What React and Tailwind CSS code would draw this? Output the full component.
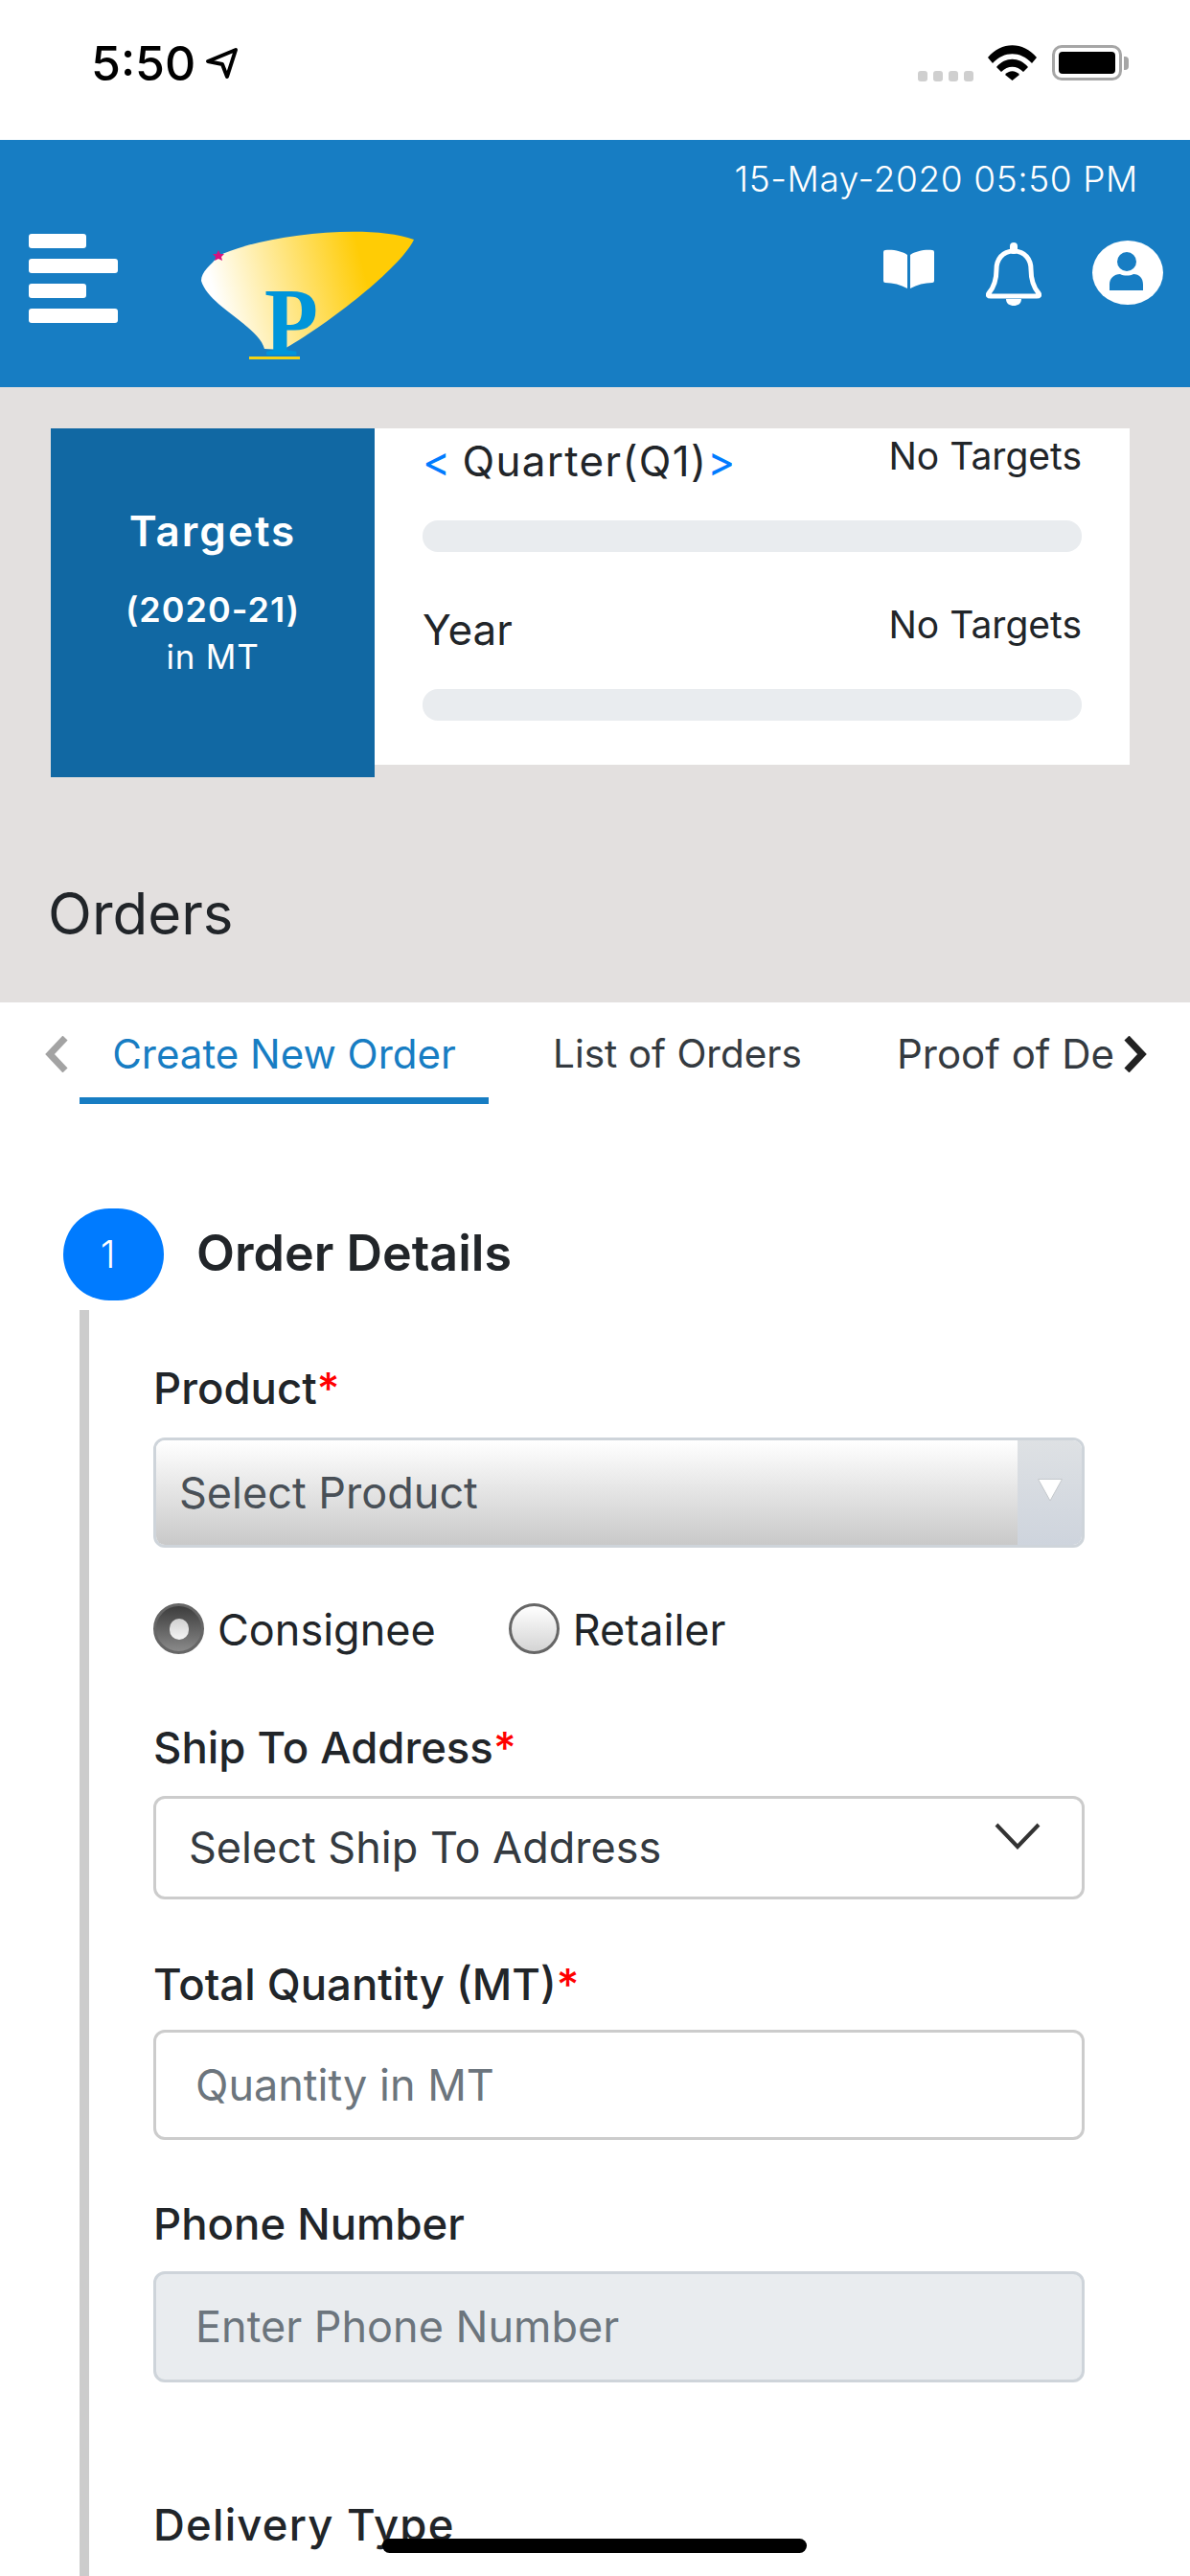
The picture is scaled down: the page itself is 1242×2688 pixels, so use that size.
const Bar = ({ className }) => <div className={`h-[15px] rounded-[3px] bg-white ${className}`} />;

function StatusBar() {
  return (
    <div className="relative h-[146px] bg-white">
      <div className="absolute left-[95px] top-[37px] text-[50px] leading-[58px] font-medium text-black">5:50</div>
      <svg className="absolute left-[214px] top-[49px]" width="35" height="34" viewBox="0 0 35 34">
        <path d="M3 15 L32 3 L23 31 L18 18 Z" fill="none" stroke="#000" strokeWidth="4" strokeLinejoin="round" />
      </svg>
      <div className="absolute right-[226px] top-[74px] flex gap-[6px]">
        {[0, 1, 2, 3].map((i) => (
          <div key={i} className="w-[10px] h-[11px] rounded-[3px] bg-[#cfcfcf]" />
        ))}
      </div>
      <svg className="absolute left-[1031px] top-[47px]" width="51" height="37" viewBox="0 0 51 37">
        <path d="M0 13 C14 -4 37 -4 51 13 L46 19 C34 6 17 6 5 19 Z" fill="#000" />
        <path d="M9 23 C18 12 33 12 42 23 L37 28 C30 21 21 21 14 28 Z" fill="#000" />
        <path d="M18 31 C22 26 29 26 33 31 L25.5 37 Z" fill="#000" />
      </svg>
      <div className="absolute left-[1098px] top-[47px] w-[73px] h-[37px] rounded-[10px] border-[3px] border-[#a6a6a6] p-[4px]">
        <div className="w-full h-full rounded-[4px] bg-black" />
      </div>
      <div className="absolute left-[1173px] top-[59px] w-[5px] h-[14px] rounded-r-[4px] bg-[#a6a6a6]" />
    </div>
  );
}

function Logo() {
  return (
    <svg width="224" height="136" viewBox="0 0 224 136" className="ml-[87px] mt-[-4px] overflow-visible">
      <defs>
        <linearGradient id="beam" x1="0" y1="0.1" x2="0.72" y2="0">
          <stop offset="0" stopColor="#ffffff" />
          <stop offset="1" stopColor="#ffcc05" />
        </linearGradient>
      </defs>
      <path
        d="M18 27 C60 6 172 -8 222 10 C208 40 130 100 85 125 L66 124 C60 100 8 80 0 53 C0 43 10 37 18 27 Z"
        fill="url(#beam)"
      />
      <polygon points="18,21 20,25 24,25 21,28 22,32 18,30 14,32 15,28 12,25 16,25" fill="#d6127f" />
      <text
        x="66"
        y="131"
        fontFamily="'Liberation Serif', serif"
        fontWeight="700"
        fontSize="101"
        textLength="56"
        lengthAdjust="spacingAndGlyphs"
        fill="#0095da"
      >
        P
      </text>
      <rect x="50" y="132" width="53" height="3" fill="#f3d315" />
    </svg>
  );
}

function Header() {
  return (
    <header className="h-[258px] bg-[#177dc3] text-white">
      <div className="flex justify-end pr-[54px] pt-[19px] text-[37px] leading-[44px] font-light tracking-[0.6px]">
        15-May-2020 05:50 PM
      </div>
      <div className="flex items-start pl-[30px] pt-[35px]">
        <div className="flex flex-col gap-[11px] w-[93px]">
          <Bar className="w-[60px]" />
          <Bar className="w-[93px]" />
          <Bar className="w-[60px]" />
          <Bar className="w-[93px]" />
        </div>
        <Logo />
        <div className="flex items-start ml-[488px]">
          <svg width="53" height="41" viewBox="0 0 53 41" className="mt-[16px]">
            <path d="M25 6 C20 2 9 0 2 1 Q0 1 0 3 V33 Q0 35 2 35 C10 35 18 37 25 41 Z" fill="#fff" />
            <path d="M28 6 C33 2 44 0 51 1 Q53 1 53 3 V33 Q53 35 51 35 C43 35 35 37 28 41 Z" fill="#fff" />
          </svg>
          <svg width="58" height="66" viewBox="0 0 58 66" className="ml-[54px] mt-[9px]">
            <rect x="25" y="0" width="8" height="12" rx="4" fill="#fff" />
            <path
              d="M29 9 C17 9 11 18 11 28 C11 39 9 46 3 53 Q1 56 5 56 H53 Q57 56 55 53 C49 46 47 39 47 28 C47 18 41 9 29 9 Z"
              fill="none"
              stroke="#fff"
              strokeWidth="5"
              strokeLinejoin="round"
            />
            <path d="M21 59 H37 C37 64 33 66 29 66 C25 66 21 64 21 59 Z" fill="#fff" />
          </svg>
          <svg width="74" height="67" viewBox="0 0 74 67" className="ml-[53px] mt-[7px]">
            <ellipse cx="37" cy="33.5" rx="37" ry="33.5" fill="#fff" />
            <ellipse cx="36" cy="22" rx="10" ry="10" fill="#177dc3" />
            <path d="M18 52 V46 C18 39 23 35 29 35 C33 37 39 37 43 35 C49 35 53 39 53 46 V52 Z" fill="#177dc3" />
          </svg>
        </div>
      </div>
    </header>
  );
}

function TargetRow({ label }) {
  return (
    <div>
      <div className="flex justify-between items-start h-[78px]">
        <div className="text-[44px] leading-[50px] text-[#212529] pt-[2px]">{label}</div>
        <div className="text-[39px] leading-[44px] text-[#212529]">No Targets</div>
      </div>
      <div className="mt-[11px] h-[33px] rounded-[16px] bg-[#e9ecef]" />
    </div>
  );
}

function Targets() {
  return (
    <section className="h-[642px] bg-[#e3e0df] pt-[43px]">
      <div className="flex items-start pl-[53px]">
        <div className="w-[338px] h-[364px] bg-[#1168a3] text-white flex flex-col items-center pt-[82px]">
          <div className="text-[44px] leading-[50px] font-semibold tracking-[2px]">Targets</div>
          <div className="text-[36px] leading-[40px] font-semibold mt-[37px] tracking-[1px]">(2020-21)</div>
          <div className="text-[35px] leading-[40px] mt-[9px] tracking-[0.8px]">in MT</div>
        </div>
        <div className="w-[788px] h-[351px] bg-white pl-[50px] pr-[50px] pt-[7px]">
          <TargetRow
            label={
              <span>
                <span className="text-[#007bff]">&lt;</span>{' '}
                <span className="tracking-[1.3px]">Quarter(Q1)</span>
                <span className="text-[#007bff]">&gt;</span>
              </span>
            }
          />
          <div className="mt-[54px]">
            <TargetRow label="Year" />
          </div>
        </div>
      </div>
      <h1 className="text-[60px] leading-[72px] text-[#212529] pl-[50px] mt-[106px]">Orders</h1>
    </section>
  );
}

function Tabs() {
  return (
    <nav className="relative h-[134px] bg-white">
      <svg className="absolute left-[46px] top-[35px]" width="26" height="38" viewBox="0 0 26 38">
        <path d="M22 2 L6 19 L22 36" fill="none" stroke="#a3a3a3" strokeWidth="7" />
      </svg>
      <div className="flex items-start text-[42px] leading-[50px] pt-[29px] text-[#343a40]">
        <div className="ml-[83px] w-[427px] h-[77px] text-center text-[#177dc3] border-b-[7px] border-[#177dc3]">
          Create New Order
        </div>
        <div className="ml-[67px] text-[40.5px]">List of Orders</div>
        <div className="ml-[99px] whitespace-nowrap">Proof of De</div>
      </div>
      <svg className="absolute left-[1172px] top-[35px]" width="26" height="38" viewBox="0 0 26 38">
        <path d="M4 2 L20 19 L4 36" fill="none" stroke="#222222" strokeWidth="7" />
      </svg>
    </nav>
  );
}

function Label({ children, required, className = '' }) {
  return (
    <div className={`text-[45.5px] leading-[52px] font-medium text-[#212529] ${className}`}>
      {children}
      {required && <span className="text-[#ff0000]">*</span>}
    </div>
  );
}

function Radio({ checked, label, className = '' }) {
  return (
    <div className={`flex items-center ${className}`}>
      <div
        className={`w-[53px] h-[53px] rounded-full flex items-center justify-center border-[3px] border-[#666666] ${
          checked ? 'bg-linear-to-b from-[#3d3d3d] to-[#8a8a8a]' : 'bg-linear-to-b from-white to-[#d4d4d4]'
        }`}
      >
        {checked && <div className="w-[20px] h-[22px] rounded-full bg-linear-to-b from-[#d0d0d0] to-[#f5f5f5]" />}
      </div>
      <span className="ml-[14px] mt-[3px] text-[45px] leading-[52px] text-[#212529]">{label}</span>
    </div>
  );
}

function OrderForm() {
  return (
    <section className="bg-white">
      <div className="flex items-center pl-[66px] pt-[81px]">
        <div className="w-[105px] h-[96px] rounded-full bg-[#007bff] text-white text-[40px] font-light flex items-center justify-center pr-[12px]">
          1
        </div>
        <div className="ml-[34px] text-[52px] leading-[60px] font-semibold text-[#212529] mb-[2px]">Order Details</div>
      </div>
      <div className="ml-[83px] mt-[10px] border-l-[10px] border-[#cccccc] pl-[67px] w-[1049px] h-[1400px]">
        <div className="pt-[56px]">
          <Label required>Product</Label>
        </div>
        <div className="mt-[25px] h-[115px] flex rounded-[12px] border-[3px] border-[#ced4da] overflow-hidden">
          <div className="flex-1 flex items-center pl-[24px] bg-linear-to-b from-white to-[#c9c9c9] text-[45px] text-[#495057]">
            Select Product
          </div>
          <div className="w-[67px] bg-linear-to-b from-[#dee1e4] to-[#ced4dd] flex justify-center pt-[40px]">
            <svg width="26" height="24" viewBox="0 0 26 24">
              <path d="M0.5 0.5 H25.5 L13 23 Z" fill="#ffffff" stroke="#c4c8cc" strokeWidth="1" />
            </svg>
          </div>
        </div>
        <div className="flex mt-[57px]">
          <Radio checked label="Consignee" />
          <Radio label="Retailer" className="ml-[76px]" />
        </div>
        <div className="mt-[71px]">
          <Label required>Ship To Address</Label>
        </div>
        <div className="mt-[24px] h-[108px] rounded-[12px] border-[3px] border-[#cccccc] flex items-center justify-between pl-[34px] pr-[43px] text-[45px] text-[#343a40]">
          Select Ship To Address
          <svg width="48" height="28" viewBox="0 0 48 28" className="mb-[24px]">
            <path d="M2 2 L24 25 L46 2" fill="none" stroke="#333333" strokeWidth="4" />
          </svg>
        </div>
        <div className="mt-[63px]">
          <Label required>Total Quantity (MT)</Label>
        </div>
        <div className="mt-[21px] h-[115px] rounded-[12px] border-[3px] border-[#cccccc] flex items-center pl-[41px] text-[45px] text-[#6c757d]">
          Quantity in MT
        </div>
        <div className="mt-[62px]">
          <Label>Phone Number</Label>
        </div>
        <div className="mt-[23px] h-[116px] rounded-[12px] border-[3px] border-[#ced4da] bg-[#e9ecef] flex items-center pl-[41px] text-[45px] text-[#6c757d]">
          Enter Phone Number
        </div>
        <div className="mt-[123px]">
          <Label className="tracking-[1.2px]">Delivery Type</Label>
        </div>
      </div>
    </section>
  );
}

export default function App() {
  return (
    <div className="relative w-[1242px] h-[2688px] overflow-hidden bg-white font-['Inter',sans-serif]">
      <StatusBar />
      <Header />
      <Targets />
      <Tabs />
      <OrderForm />
      <div className="absolute left-[399px] top-[2649px] w-[443px] h-[15px] rounded-full bg-black" />
    </div>
  );
}
